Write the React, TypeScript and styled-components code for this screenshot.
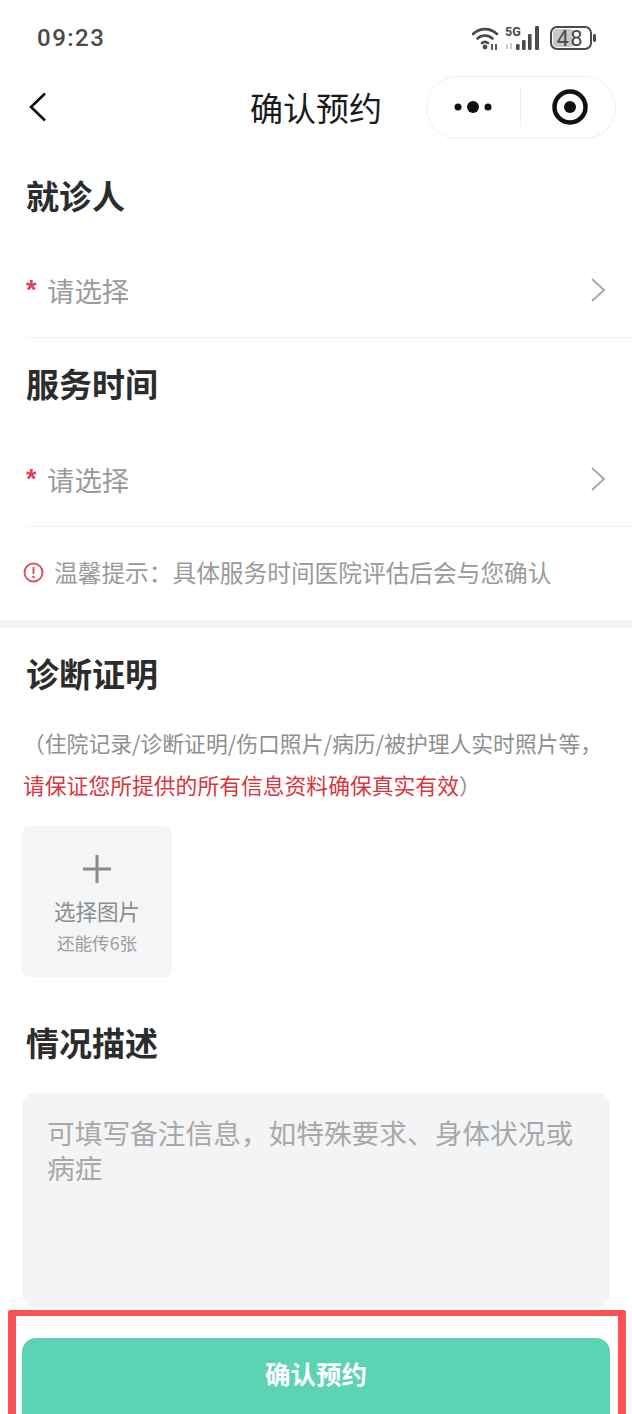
import React from "react";
import styled, { createGlobalStyle } from "styled-components";

const Global = createGlobalStyle`
  html, body { margin: 0; padding: 0; background: #fff; }
  body { font-family: "Noto Sans CJK SC", "Noto Sans", sans-serif; }
  * { box-sizing: border-box; }
`;

const Page = styled.div`
  width: 632px;
  height: 1414px;
  overflow: hidden;
  background: #fff;
  display: flex;
  flex-direction: column;
  & > * { flex-shrink: 0; }
`;

const StatusBar = styled.div`
  height: 75px;
  padding: 0 36px 0 37px;
  display: flex;
  align-items: center;
  justify-content: space-between;
`;

const Time = styled.div`
  font-family: Roboto, sans-serif;
  font-size: 24px;
  font-weight: 500;
  letter-spacing: 1.5px;
  color: #4a4a4a;
`;

const NavBar = styled.div`
  height: 64px;
  padding: 0 16px;
  display: grid;
  grid-template-columns: 1fr auto 1fr;
  align-items: center;
`;

const Back = styled.div`
  padding-left: 12px;
  display: flex;
  align-items: center;
`;

const Title = styled.div`
  font-size: 33px;
  line-height: 46px;
  color: #1a1a1a;
`;

const Capsule = styled.div`
  justify-self: end;
  width: 190px;
  height: 63px;
  border: 1px solid #efefef;
  border-radius: 32px;
  display: flex;
  align-items: center;
`;

const CapsuleHalf = styled.div<{ $pad: string }>`
  flex: 1;
  padding: ${(p) => p.$pad};
  display: flex;
  align-items: center;
  justify-content: center;
`;

const CapsuleRule = styled.div`
  width: 1px;
  height: 38px;
  background: #efefef;
`;

const Section = styled.section`
  padding: 0 0 0 26px;
`;

const Heading = styled.h2<{ $top: number }>`
  margin: ${(p) => p.$top}px 0 0;
  font-size: 33px;
  line-height: 46px;
  font-weight: 700;
  color: #2c2c2c;
`;

const PickRow = styled.div<{ $top: number }>`
  height: 95px;
  padding-right: 26px;
  margin-top: ${(p) => p.$top}px;
  display: flex;
  align-items: center;
  border-bottom: 1px solid #f2f2f2;
`;

const Star = styled.span`
  width: 21px;
  font-size: 27px;
  font-weight: 700;
  line-height: 36px;
  color: #e0424f;
  font-family: "Liberation Sans", sans-serif;
`;

const PickText = styled.span`
  flex: 1;
  font-size: 27.4px;
  color: #9b9b9b;
`;

const Tip = styled.div`
  height: 93px;
  padding: 0 0 3px 23px;
  display: flex;
  align-items: center;
  gap: 10px;
  font-size: 23.7px;
  color: #9a9a9a;
`;

const Band = styled.div`
  height: 8px;
  background: #f4f4f4;
`;

const Note = styled.p`
  margin: 26px 0 0;
  padding: 0 0 0 23px;
  font-size: 21.8px;
  line-height: 42px;
  color: #8f8f8f;
`;

const NoteRed = styled.span`
  color: #d9363e;
`;

const Upload = styled.div`
  width: 150px;
  height: 151px;
  margin: 20px 0 0 22px;
  border-radius: 8px;
  background: #f3f5f7;
  display: flex;
  flex-direction: column;
  align-items: center;
  padding-top: 28px;
`;

const UploadLabel = styled.div`
  margin-top: 12px;
  font-size: 21.5px;
  line-height: 30px;
  color: #8d8d8d;
`;

const UploadHint = styled.div`
  margin-top: 5px;
  font-size: 17.6px;
  line-height: 24px;
  color: #9d9d9d;
`;

const TextBox = styled.div`
  height: 214px;
  margin: 28px 22px 0;
  padding: 22px 25px;
  border-radius: 14px;
  background: #f3f4f6;
  font-size: 27.7px;
  line-height: 34.5px;
  color: #a8a8a8;
`;

const Footer = styled.div`
  height: 120px;
  margin: 3px 6px 0 8px;
  border: solid #fb5256;
  border-width: 6px 8px 0;
  border-radius: 3px 3px 0 0;
  padding: 22px 8px 0 6px;
`;

const Submit = styled.div`
  height: 90px;
  border-radius: 14px;
  background: #5cd3b2;
  display: flex;
  align-items: center;
  justify-content: center;
  font-size: 25.5px;
  font-weight: 700;
  color: #fff;
  padding-bottom: 22px;
`;

const Chevron = () => (
  <svg width="16" height="26" viewBox="0 0 16 26" fill="none">
    <path d="M2 2l12 11L2 24" stroke="#a9a9a9" strokeWidth="2" />
  </svg>
);

const StatusIcons = () => (
  <svg width="124" height="26" viewBox="0 0 124 26" fill="none">
    <g stroke="#4a4a4a" strokeWidth="2.6" strokeLinecap="round">
      <path d="M1 9c7-6.5 17-6.5 24 0" />
      <path d="M5.5 13.5c4.500-4 10.500-4 15 0" />
      <path d="M10 18c2-1.600 4-1.600 6 0" />
    </g>
    <circle cx="13" cy="22" r="2.400" fill="#4a4a4a" />
    <path d="M20 19v6M24 19v6" stroke="#4a4a4a" strokeWidth="1.800" />
    <text x="33" y="11" fontFamily="Roboto, sans-serif" fontWeight="700" fontSize="12.500" fill="#4a4a4a">5G</text>
    <path d="M35 19v5M39 18v6" stroke="#cfcfcf" strokeWidth="2" />
    <g fill="#4a4a4a">
      <rect x="44" y="19" width="3.600" height="6" rx="1.200" />
      <rect x="50" y="15" width="3.600" height="10" rx="1.200" />
      <rect x="56" y="9" width="3.600" height="16" rx="1.200" />
      <rect x="63" y="1" width="4" height="24" rx="1.200" />
    </g>
    <rect x="79" y="2" width="40" height="22" rx="6" stroke="#4a4a4a" strokeWidth="2" />
    <rect x="81" y="4" width="21" height="18" rx="4" fill="#c8c8c8" />
    <text x="84.500" y="20.500" fontFamily="Roboto, sans-serif" fontSize="22" letterSpacing="1.500" fill="#4a4a4a">48</text>
    <rect x="121" y="9" width="3" height="8" rx="1.400" fill="#4a4a4a" />
  </svg>
);

const TIP = "\u6E29\u99A8\u63D0\u793A\uFF1A\u5177\u4F53\u670D\u52A1\u65F6\u95F4\u533B\u9662\u8BC4\u4F30\u540E\u4F1A\u4E0E\u60A8\u786E\u8BA4";
const NOTE_1 = "\uFF08\u4F4F\u9662\u8BB0\u5F55/\u8BCA\u65AD\u8BC1\u660E/\u4F24\u53E3\u7167\u7247/\u75C5\u5386/\u88AB\u62A4\u7406\u4EBA\u5B9E\u65F6\u7167\u7247\u7B49\uFF0C";
const NOTE_CLOSE = "\uFF09";
const HINT = "\u53EF\u586B\u5199\u5907\u6CE8\u4FE1\u606F\uFF0C\u5982\u7279\u6B8A\u8981\u6C42\u3001\u8EAB\u4F53\u72B6\u51B5\u6216\u75C5\u75C7";

export default function App() {
  return (
    <Page>
      <Global />
      <StatusBar>
        <Time>09:23</Time>
        <StatusIcons />
      </StatusBar>
      <NavBar>
        <Back>
          <svg width="19" height="30" viewBox="0 0 19 30" fill="none">
            <path d="M17 1.500L3 15l14 13.500" stroke="#111" strokeWidth="2.600" />
          </svg>
        </Back>
        <Title>确认预约</Title>
        <Capsule>
          <CapsuleHalf $pad="0 2px 0 0">
            <svg width="38" height="14" viewBox="0 0 38 14" fill="#111">
              <circle cx="4" cy="7" r="3.500" />
              <circle cx="19" cy="7" r="6" />
              <circle cx="34" cy="7" r="3.500" />
            </svg>
          </CapsuleHalf>
          <CapsuleRule />
          <CapsuleHalf $pad="0 0 0 3px">
            <svg width="36" height="36" viewBox="0 0 36 36" fill="none">
              <circle cx="18" cy="18" r="15.500" stroke="#111" strokeWidth="4.500" />
              <circle cx="18" cy="18" r="6" fill="#111" />
            </svg>
          </CapsuleHalf>
        </Capsule>
      </NavBar>
      <Section>
        <Heading $top={33}>就诊人</Heading>
        <PickRow $top={25}>
          <Star>*</Star>
          <PickText>请选择</PickText>
          <Chevron />
        </PickRow>
        <Heading $top={22}>服务时间</Heading>
        <PickRow $top={26}>
          <Star>*</Star>
          <PickText>请选择</PickText>
          <Chevron />
        </PickRow>
      </Section>
      <Tip>
        <svg width="21" height="21" viewBox="0 0 21 21" fill="none">
          <circle cx="10.500" cy="10.500" r="9" stroke="#d9545c" strokeWidth="2" />
          <path d="M10.500 5v7" stroke="#d9545c" strokeWidth="2" />
          <circle cx="10.500" cy="15" r="1.300" fill="#d9545c" />
        </svg>
        {TIP}
      </Tip>
      <Band />
      <Section>
        <Heading $top={22}>诊断证明</Heading>
      </Section>
      <Note>
        {NOTE_1}
        <br />
        <NoteRed>请保证您所提供的所有信息资料确保真实有效</NoteRed>
        {NOTE_CLOSE}
      </Note>
      <Upload>
        <svg width="30" height="30" viewBox="0 0 30 30" fill="none">
          <path d="M15 1v28M1 15h28" stroke="#8a8a8a" strokeWidth="3" />
        </svg>
        <UploadLabel>选择图片</UploadLabel>
        <UploadHint>还能传6张</UploadHint>
      </Upload>
      <Section>
        <Heading $top={42}>情况描述</Heading>
      </Section>
      <TextBox>{HINT}</TextBox>
      <Footer>
        <Submit>确认预约</Submit>
      </Footer>
    </Page>
  );
}
